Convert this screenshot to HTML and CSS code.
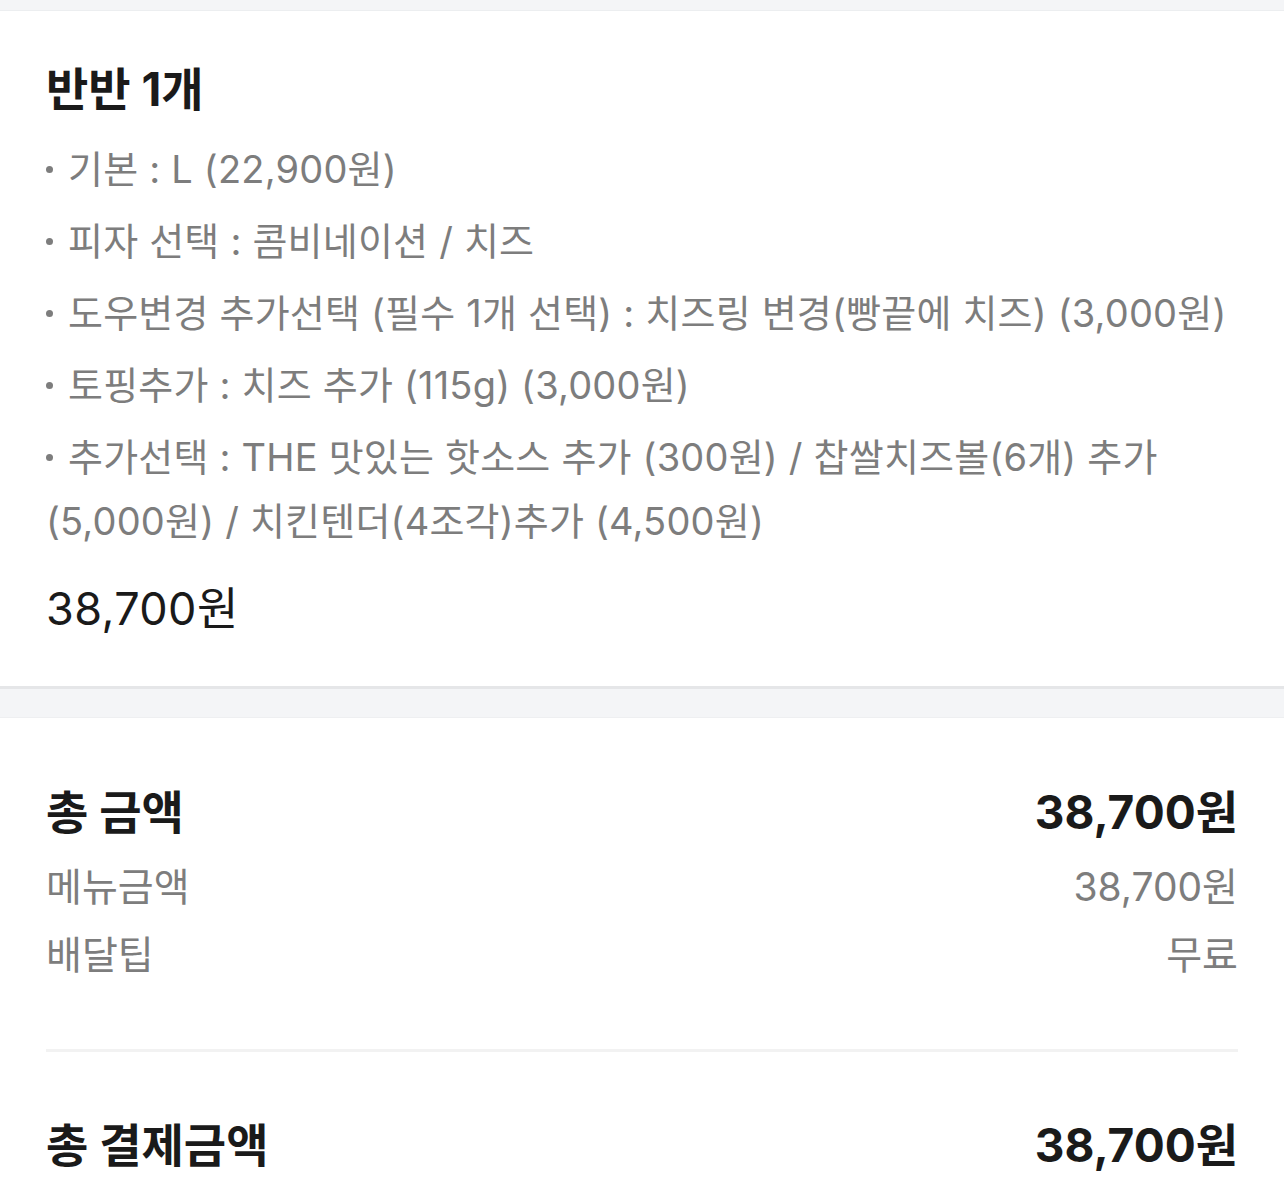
FILE: index.html
```html
<!DOCTYPE html>
<html lang="ko">
  <head>
    <meta charset="UTF-8" />
    <meta name="viewport" content="width=device-width, initial-scale=1.0" />
    <title>주문 확인</title>
    <link rel="stylesheet" href="styles.css">
  </head>
  <body>
    <div class="top-gap"></div>
    <section class="menu">
      <h2 class="menu-title">반반 1개</h2>
      <ul class="options">
        <li>기본 : L (22,900원)</li>
        <li>피자 선택 : 콤비네이션 / 치즈</li>
        <li>도우변경 추가선택 (필수 1개 선택) : 치즈링 변경(빵끝에 치즈) (3,000원)</li>
        <li>토핑추가 : 치즈 추가 (115g) (3,000원)</li>
        <li>추가선택 : THE 맛있는 핫소스 추가 (300원) / 찹쌀치즈볼(6개) 추가 (5,000원) / 치킨텐더(4조각)추가 (4,500원)</li>
      </ul>
      <p class="menu-price">38,700원</p>
    </section>
    <div class="band"></div>
    <section class="summary">
      <div class="row row-total">
        <span>총 금액</span>
        <span>38,700원</span>
      </div>
      <div class="row row-sub">
        <span>메뉴금액</span>
        <span>38,700원</span>
      </div>
      <div class="row row-sub row-tip">
        <span>배달팁</span>
        <span>무료</span>
      </div>
      <hr class="line" />
      <div class="row row-total row-pay">
        <span>총 결제금액</span>
        <span>38,700원</span>
      </div>
    </section>
  </body>
</html>
```

FILE: styles.css
```css
* {
  padding: 0;
  margin: 0;
  box-sizing: border-box;
}
body {
  background-color: #fff;
  font-family: Inter, "Noto Sans CJK KR", sans-serif;
  color: #1a1a1a;
  overflow: hidden;
}
.top-gap {
  height: 11px;
  background-color: #f4f5f7;
  border-bottom: 1px solid #eceef0;
}
.menu {
  padding: 50px 46px 49px 46px;
}
.menu-title {
  font-size: 46px;
  font-weight: 700;
  line-height: 56px;
}
.options {
  list-style: none;
  margin-top: 20px;
  display: flex;
  flex-direction: column;
  gap: 8px;
}
.options li {
  font-size: 38px;
  line-height: 64px;
  letter-spacing: 0.2px;
  color: #7d7d7d;
}
.options li::before {
  content: "";
  display: inline-block;
  width: 7px;
  height: 7px;
  border-radius: 50%;
  background-color: #7d7d7d;
  vertical-align: middle;
  margin: 0 15px 6px 0;
}
.menu-price {
  margin-top: 28px;
  font-size: 45px;
  line-height: 56px;
  letter-spacing: 0.4px;
}
.band {
  height: 32px;
  background-color: #f4f5f7;
  border-top: 3px solid #e5e6e8;
  border-bottom: 1px solid #eeeff1;
}
.summary {
  padding: 66px 46px 0 46px;
}
.row {
  display: flex;
  justify-content: space-between;
  align-items: center;
}
.row-total {
  font-size: 46px;
  font-weight: 700;
  line-height: 56px;
}
.row-sub {
  margin-top: 15px;
  font-size: 39px;
  line-height: 64px;
  color: #7d7d7d;
}
.row-tip {
  margin-top: 4px;
}
.line {
  border: none;
  height: 3px;
  background-color: #f2f2f2;
  margin-top: 62px;
}
.row-pay {
  margin-top: 65px;
}
```
